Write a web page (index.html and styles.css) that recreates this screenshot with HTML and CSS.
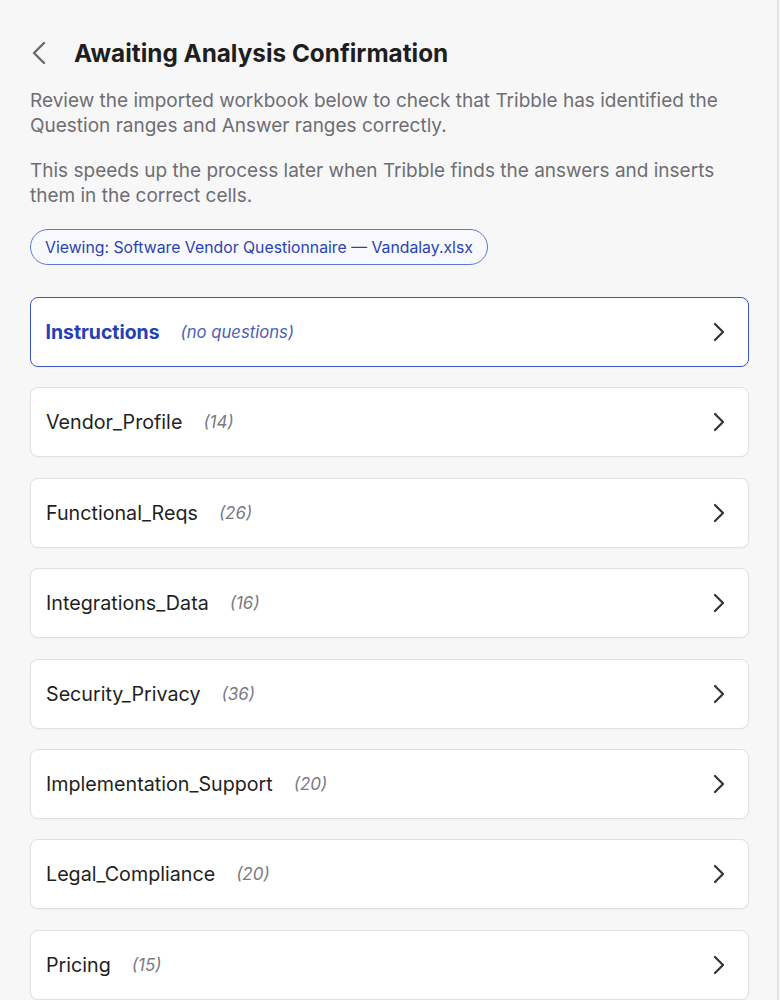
FILE: index.html
```html
<!DOCTYPE html>
<html>
<head>
<meta charset="utf-8">
<link rel="stylesheet" href="styles.css">
</head>
<body>
<div class="panel">
  <header class="header">
    <button class="back" aria-label="Back">
      <svg width="16" height="24" viewBox="0 0 16 24"><path d="M13 2 L3 12 L13 22" fill="none" stroke="#6a6a6e" stroke-width="2.4" stroke-linecap="round" stroke-linejoin="round"/></svg>
    </button>
    <h1 class="title">Awaiting Analysis Confirmation</h1>
  </header>
  <p class="desc">Review the imported workbook below to check that Tribble has identified the Question ranges and Answer ranges correctly.</p>
  <p class="desc">This speeds up the process later when Tribble finds the answers and inserts them in the correct cells.</p>
  <div class="pill">Viewing: Software Vendor Questionnaire — Vandalay.xlsx</div>
  <ul class="sheets">
    <li class="sheet active"><span class="name">Instructions</span><span class="count">(no questions)</span><svg class="chev" width="12" height="20" viewBox="0 0 12 20"><path d="M2 2 L10 10 L2 18" fill="none" stroke="#333" stroke-width="2.2" stroke-linecap="round" stroke-linejoin="round"/></svg></li>
    <li class="sheet"><span class="name">Vendor_Profile</span><span class="count">(14)</span><svg class="chev" width="12" height="20" viewBox="0 0 12 20"><path d="M2 2 L10 10 L2 18" fill="none" stroke="#333" stroke-width="2.2" stroke-linecap="round" stroke-linejoin="round"/></svg></li>
    <li class="sheet"><span class="name">Functional_Reqs</span><span class="count">(26)</span><svg class="chev" width="12" height="20" viewBox="0 0 12 20"><path d="M2 2 L10 10 L2 18" fill="none" stroke="#333" stroke-width="2.2" stroke-linecap="round" stroke-linejoin="round"/></svg></li>
    <li class="sheet"><span class="name">Integrations_Data</span><span class="count">(16)</span><svg class="chev" width="12" height="20" viewBox="0 0 12 20"><path d="M2 2 L10 10 L2 18" fill="none" stroke="#333" stroke-width="2.2" stroke-linecap="round" stroke-linejoin="round"/></svg></li>
    <li class="sheet"><span class="name">Security_Privacy</span><span class="count">(36)</span><svg class="chev" width="12" height="20" viewBox="0 0 12 20"><path d="M2 2 L10 10 L2 18" fill="none" stroke="#333" stroke-width="2.2" stroke-linecap="round" stroke-linejoin="round"/></svg></li>
    <li class="sheet"><span class="name">Implementation_Support</span><span class="count">(20)</span><svg class="chev" width="12" height="20" viewBox="0 0 12 20"><path d="M2 2 L10 10 L2 18" fill="none" stroke="#333" stroke-width="2.2" stroke-linecap="round" stroke-linejoin="round"/></svg></li>
    <li class="sheet"><span class="name">Legal_Compliance</span><span class="count">(20)</span><svg class="chev" width="12" height="20" viewBox="0 0 12 20"><path d="M2 2 L10 10 L2 18" fill="none" stroke="#333" stroke-width="2.2" stroke-linecap="round" stroke-linejoin="round"/></svg></li>
    <li class="sheet"><span class="name">Pricing</span><span class="count">(15)</span><svg class="chev" width="12" height="20" viewBox="0 0 12 20"><path d="M2 2 L10 10 L2 18" fill="none" stroke="#333" stroke-width="2.2" stroke-linecap="round" stroke-linejoin="round"/></svg></li>
  </ul>
</div>
</body>
</html>
```

FILE: styles.css
```css
* { box-sizing: border-box; }
html, body {
  margin: 0;
  padding: 0;
  background: #f7f7f8;
  font-family: Inter, "Noto Sans", sans-serif;
}
.panel {
  width: 779px;
  min-height: 1000px;
  border-right: 2px solid #e2e2e4;
  padding: 38px 28px 0 30px;
  background: #f7f7f8;
}
.header {
  display: flex;
  align-items: center;
  height: 30px;
  margin-bottom: 20px;
}
.back {
  border: 0;
  background: none;
  padding: 0;
  margin: 0 0 0 1px;
  width: 43px;
  height: 30px;
  display: flex;
  align-items: center;
  cursor: pointer;
}
.title {
  margin: 0;
  font-size: 24.3px;
  line-height: 30px;
  font-weight: 700;
  color: #1e1e20;
}
.desc {
  margin: 0 0 20px;
  font-size: 19px;
  line-height: 25px;
  color: #6e6e73;
}
.desc + .desc { margin-bottom: 21px; }
.pill {
  display: inline-flex;
  align-items: center;
  height: 36px;
  padding: 0 14px;
  border: 1.5px solid #5f78d2;
  border-radius: 18px;
  color: #2a43b0;
  font-size: 15.8px;
  background: #f8f9fd;
}
.sheets {
  list-style: none;
  margin: 32px 0 0;
  padding: 0;
  display: flex;
  flex-direction: column;
  gap: 20.4px;
}
.sheet {
  display: flex;
  align-items: center;
  height: 70px;
  padding: 0 23px 0 15px;
  background: #fff;
  border: 1px solid #e0e0e3;
  border-radius: 8px;
  box-shadow: 0 1px 2px rgba(0,0,0,0.03);
}
.sheet.active {
  border: 1.5px solid #3c56c8;
  padding-left: 14.5px;
}
.name {
  font-size: 19.7px;
  color: #1f1f22;
}
.active .name {
  color: #2540b3;
  font-weight: 700;
  font-size: 19.4px;
}
.count {
  margin-left: 21px;
  font-size: 17px;
  font-style: italic;
  color: #7a7a7f;
}
.active .count { color: #4a5fb8; font-size: 16.7px; }
.chev { margin-left: auto; }
```
